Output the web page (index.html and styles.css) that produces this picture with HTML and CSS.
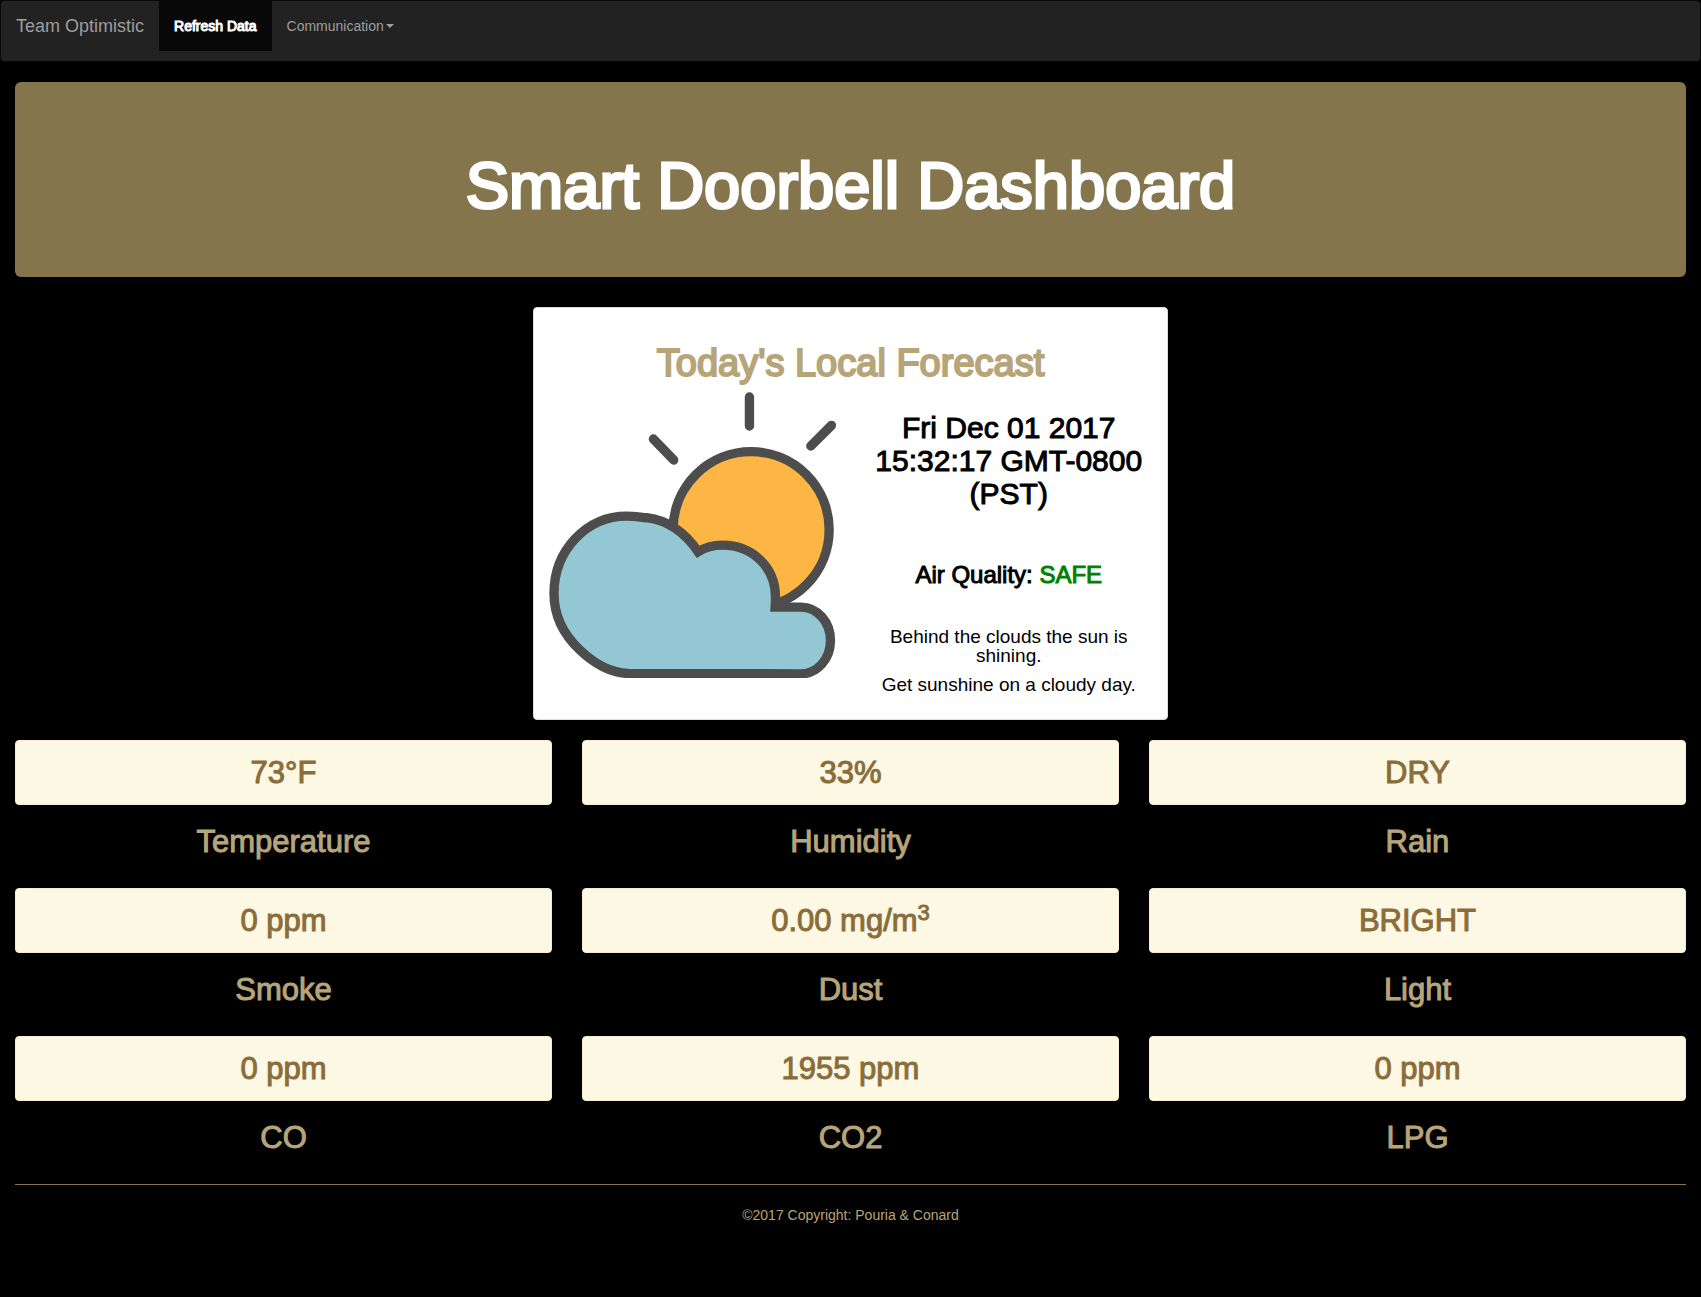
FILE: index.html
```
<!DOCTYPE html>
<html lang="en">
<head>
  <meta charset="utf-8">
  <meta name="viewport" content="width=device-width, initial-scale=1">
  <title>Smart Doorbell Dashboard</title>
  <link rel="stylesheet" href="styles.css">
</head>
<body>
  <nav class="navbar">
    <a class="brand" href="#">Team Optimistic</a>
    <ul class="nav-list">
      <li><a class="nav-item active" href="#">Refresh Data</a></li>
      <li><button class="nav-item" type="button" aria-haspopup="true">Communication<span class="caret"></span></button></li>
    </ul>
  </nav>

  <main class="container">
    <header class="banner">
      <h1>Smart Doorbell Dashboard</h1>
    </header>

    <section class="forecast">
      <h2 class="forecast-title">Today's Local Forecast</h2>
      <div class="forecast-body">
        <svg class="weather-icon" viewBox="57 276 859 859" role="img" aria-label="Partly cloudy">
          <g fill="none" stroke="#4d4d4d" stroke-width="28">
            <path stroke-linecap="round" d="M658 291V378M370 417L431 480M904 376L842 438"/>
            <circle cx="663" cy="689" r="234" fill="#fdb643"/>
            <path fill="#94c7d4" d="M735 921H812C862 921 901 966 901 1021S862 1121 812 1121L295 1120C240 1118 192 1090 150 1050C100 1003 72 950 72 880C72 750 170 648 290 648C310 648 335 652 350 653C420 662 470 705 504 755C525 742 550 735 577 735C670 735 736 805 736 890V905Z"/>
          </g>
        </svg>
        <div class="forecast-info">
          <p class="date">Fri Dec 01 2017 15:32:17 GMT-0800 (PST)</p>
          <p class="air">Air Quality: <span class="safe">SAFE</span></p>
          <p class="note">Behind the clouds the sun is shining.</p>
          <p class="note">Get sunshine on a cloudy day.</p>
        </div>
      </div>
    </section>

    <dl class="readings">
      <div class="reading"><dd>73°F</dd><dt>Temperature</dt></div>
      <div class="reading"><dd>33%</dd><dt>Humidity</dt></div>
      <div class="reading"><dd>DRY</dd><dt>Rain</dt></div>
      <div class="reading"><dd>0 ppm</dd><dt>Smoke</dt></div>
      <div class="reading"><dd>0.00 mg/m<sup>3</sup></dd><dt>Dust</dt></div>
      <div class="reading"><dd>BRIGHT</dd><dt>Light</dt></div>
      <div class="reading"><dd>0 ppm</dd><dt>CO</dt></div>
      <div class="reading"><dd>1955 ppm</dd><dt>CO2</dt></div>
      <div class="reading"><dd>0 ppm</dd><dt>LPG</dt></div>
    </dl>

    <footer class="footer">©2017 Copyright: Pouria &amp; Conard</footer>
  </main>
</body>
</html>
```
FILE: styles.css
```
* {
  box-sizing: border-box;
}

body {
  margin: 0;
  background: #000;
  color: #b7a57a;
  font: 14px/20px "Liberation Sans", Arial, sans-serif;
}

h1, h2, p, ul, dl, dd {
  margin: 0;
  padding: 0;
}

.navbar {
  display: flex;
  align-items: flex-start;
  padding-bottom: 10px;
  margin-bottom: 20px;
  background: #222;
  border: 1px solid #080808;
  border-radius: 4px;
}

.brand {
  padding: 15px;
  color: #9d9d9d;
  font-size: 18px;
  text-decoration: none;
}

.nav-list {
  display: flex;
  list-style: none;
}

.nav-item {
  display: flex;
  align-items: center;
  padding: 15px;
  border: 0;
  background: none;
  color: #9d9d9d;
  font: inherit;
  text-decoration: none;
  cursor: pointer;
}

.nav-item.active {
  background: #080808;
  color: #fff;
  -webkit-text-stroke: 1px;
}

.caret {
  margin-left: 2px;
  border-top: 4px solid;
  border-left: 4px solid transparent;
  border-right: 4px solid transparent;
}

.container {
  padding: 0 15px;
}

.banner {
  padding: 69px 15px 57px;
  margin-bottom: 30px;
  border-radius: 6px;
  background: #85754d;
  color: #fff;
  text-align: center;
}

.banner h1 {
  font-size: 65px;
  font-weight: 400;
  line-height: 69px;
  -webkit-text-stroke: 3px;
}

.forecast {
  width: 38%;
  min-width: 600px;
  margin: 0 auto 20px;
  padding: 35px 15px 25px;
  border: 1px solid #ddd;
  border-radius: 4px;
  background: #fff;
  color: #000;
  text-align: center;
}

.forecast-title {
  margin-bottom: 9px;
  color: #b7a57a;
  font-size: 38px;
  font-weight: 400;
  line-height: 40px;
  -webkit-text-stroke: 2px;
}

.forecast-body {
  display: grid;
  grid-template-columns: 1fr 1fr;
  gap: 30px;
  align-items: start;
}

.weather-icon {
  display: block;
  width: 100%;
}

.forecast-info {
  padding-top: 19px;
  -webkit-text-stroke: 1px;
}

.date {
  margin-bottom: 52px;
  font-size: 30px;
  line-height: 33px;
}

.air {
  margin-bottom: 39px;
  font-size: 24px;
  line-height: 26px;
}

.safe {
  color: #008000;
}

.note {
  margin-bottom: 10px;
  font-size: 19px;
  line-height: 19px;
  -webkit-text-stroke: 0;
}

.note:last-child {
  margin-bottom: 0;
}

.readings {
  display: grid;
  grid-template-columns: repeat(3, 1fr);
  gap: 30px;
  padding-bottom: 30px;
  border-bottom: 1px solid #85754d;
}

.reading {
  display: flex;
  flex-direction: column;
  gap: 20px;
  font-size: 31px;
  line-height: 33px;
  text-align: center;
  -webkit-text-stroke: 1px;
}

.reading dd {
  padding: 15px;
  border: 1px solid #faebcc;
  border-radius: 4px;
  background: #fcf8e3;
  color: #8a6d3b;
}

.reading sup {
  font-size: 22px;
  line-height: 0;
}

.footer {
  padding: 20px 0;
  text-align: center;
}
```
